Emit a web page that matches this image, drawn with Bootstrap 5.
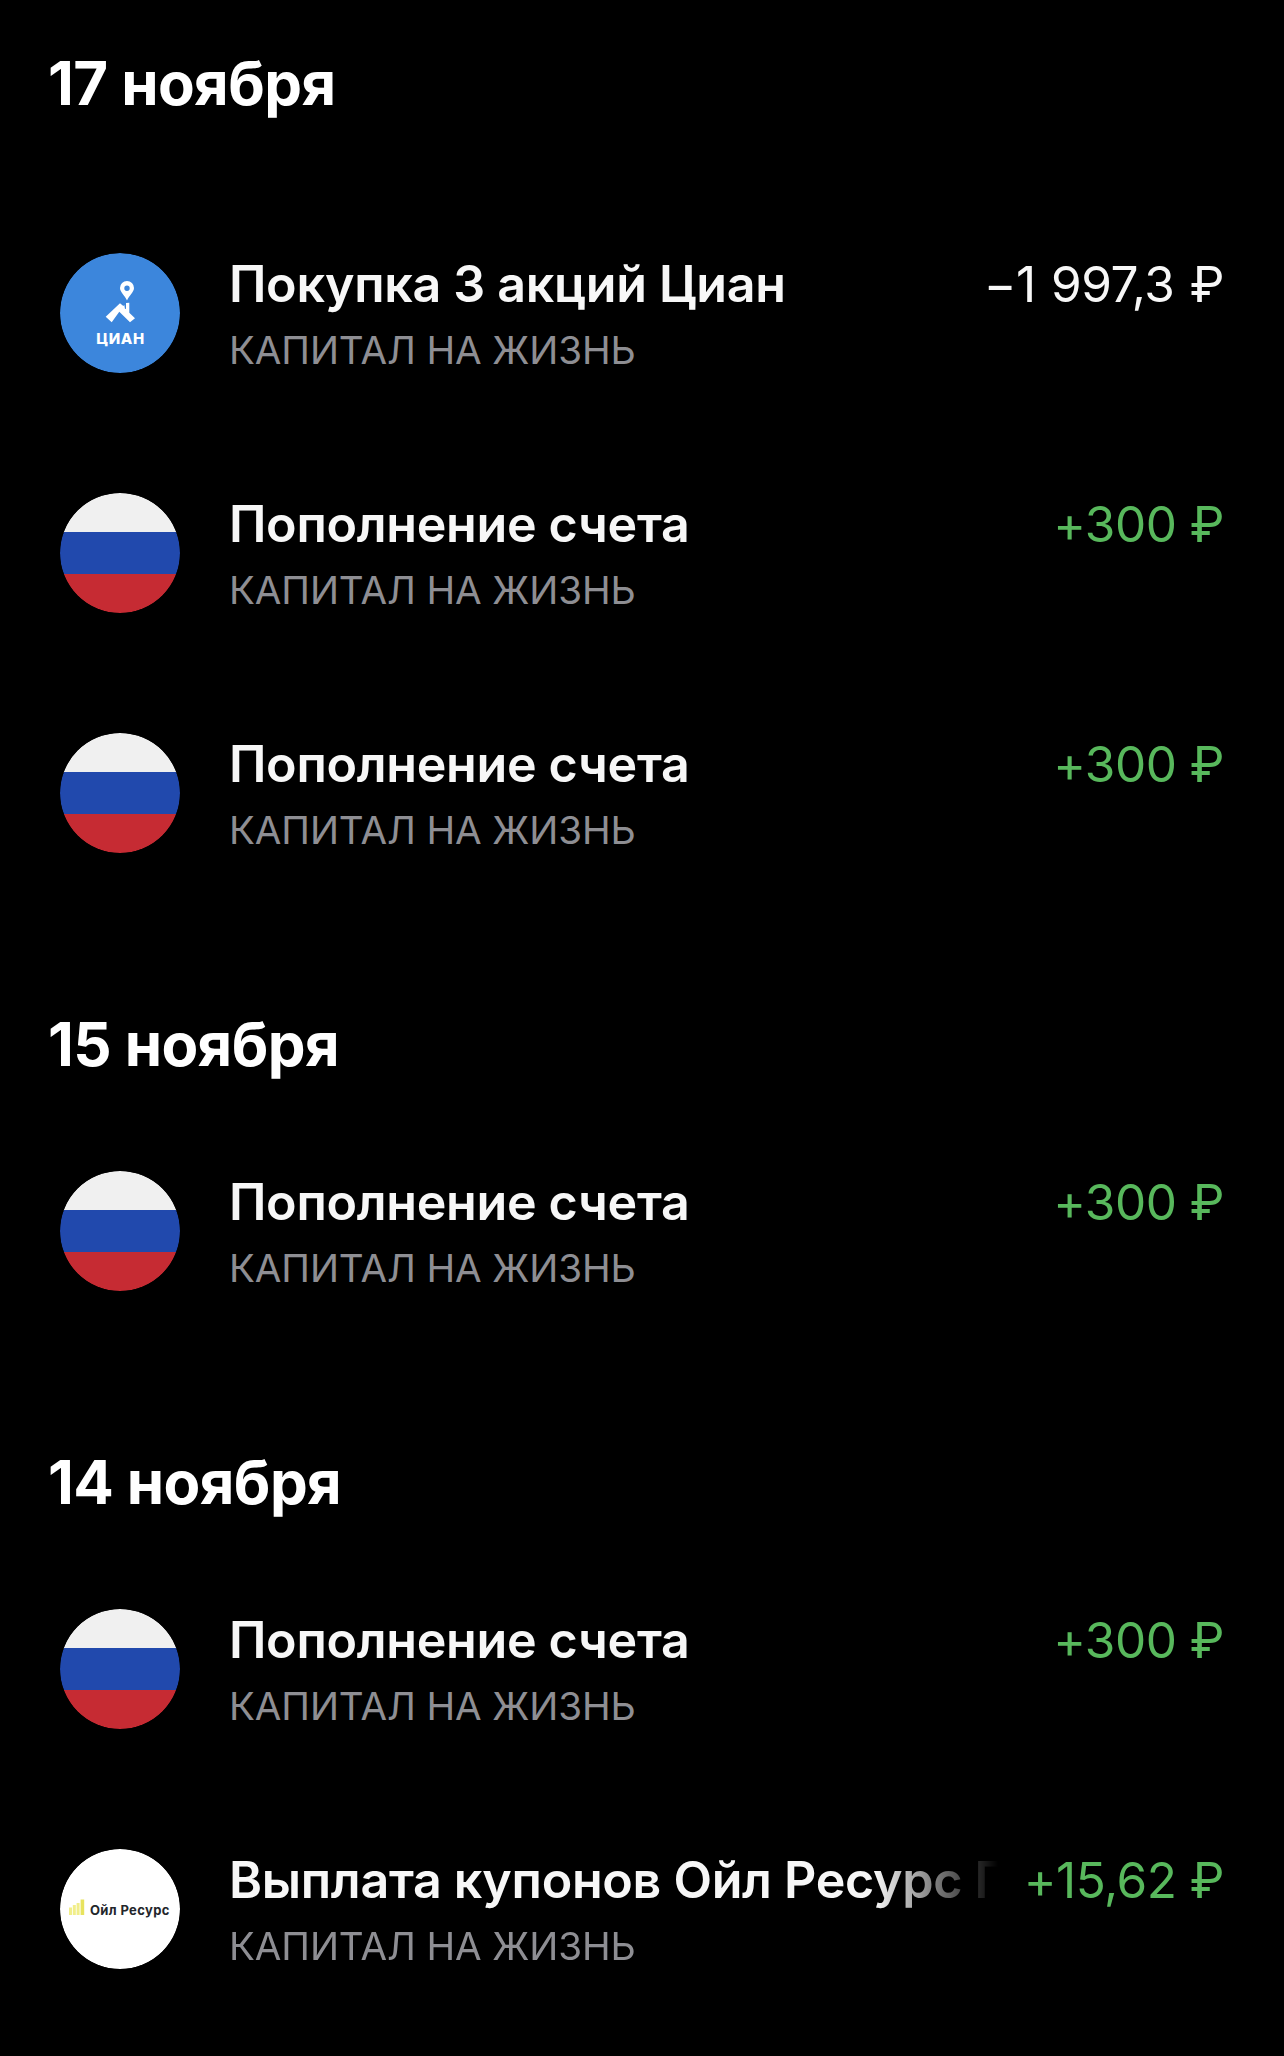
<!DOCTYPE html>
<html lang="ru">
<head>
<meta charset="utf-8">
<title>Операции</title>
<link href="https://cdn.jsdelivr.net/npm/bootstrap@5.3.0/dist/css/bootstrap.min.css" rel="stylesheet">
<style>
html,body{background:#000;}
body{font-family:Inter,"Noto Sans",sans-serif;color:#fff;overflow:hidden;}
.feed{padding:0 60px 0 48px;height:2056px;}
.day-title{font-size:60px;font-weight:700;line-height:80px;letter-spacing:-.6px;margin:0;padding:91px 0 27px;color:#fff;}
.day-first{padding:43px 0 70px;}
.op-row{height:240px;padding-left:12px;}
.op-logo{width:120px;height:120px;flex:0 0 120px;border-radius:50%;display:block;}
.op-body{margin-left:49px;min-width:0;flex:1 1 auto;}
.op-title{font-size:50.2px;font-weight:600;line-height:60px;letter-spacing:-.3px;white-space:nowrap;color:#f7f7f7;}
.op-fade{min-width:0;-webkit-mask-image:linear-gradient(90deg,#000 84%,transparent 100%);mask-image:linear-gradient(90deg,#000 84%,transparent 100%);}
.op-sub{font-size:38.6px;line-height:46px;margin-top:13px;color:#8e8e93;letter-spacing:-.1px;white-space:nowrap;}
.op-amount{font-size:49.5px;font-weight:400;line-height:60px;letter-spacing:-.5px;white-space:nowrap;flex:0 0 auto;margin-left:26px;}
.op-in{color:#58b85c;}
.op-out{color:#f7f7f7;word-spacing:2px;}
</style>
</head>
<body>
<main class="feed">
  <h2 class="day-title day-first">17 ноября</h2>

  <div class="op-row d-flex align-items-center">
    <svg class="op-logo" viewBox="0 0 120 120" role="img" aria-label="Циан">
      <circle cx="60" cy="60" r="60" fill="#3c86dc"/>
      <path fill="#fff" fill-rule="evenodd" d="M67 28a7 7 0 0 0-7 7c0 4 4.500 7 7 12.500 2.500-5.500 7-8.500 7-12.500a7 7 0 0 0-7-7zm0 4.500a2.700 2.700 0 1 1 0 5.400 2.700 2.700 0 0 1 0-5.400z"/>
      <path fill="#fff" d="M45.700 63.700 60 50.300l3.300 2.700 1-1 .7 4 1-.3v-5.700l3.300-.3v10l5.700 5.600-5 4-10.700-10.600-7.600 10.600z"/>
      <text x="60.500" y="90.500" text-anchor="middle" font-family="Inter, sans-serif" font-weight="800" font-size="15" letter-spacing=".6" fill="#fff">ЦИАН</text>
    </svg>
    <div class="op-body d-flex justify-content-between">
      <div><div class="op-title">Покупка 3 акций Циан</div><div class="op-sub">КАПИТАЛ НА ЖИЗНЬ</div></div>
      <div class="op-amount op-out">−1 997,3 ₽</div>
    </div>
  </div>

  <div class="op-row d-flex align-items-center">
    <svg class="op-logo" viewBox="0 0 120 120" role="img" aria-label="Флаг России"><defs><clipPath id="c1"><circle cx="60" cy="60" r="60"/></clipPath></defs><g clip-path="url(#c1)"><rect width="120" height="40" fill="#f0f0f0"/><rect y="39" width="120" height="42" fill="#2149ad"/><rect y="81" width="120" height="39" fill="#c62b33"/></g></svg>
    <div class="op-body d-flex justify-content-between">
      <div><div class="op-title">Пополнение счета</div><div class="op-sub">КАПИТАЛ НА ЖИЗНЬ</div></div>
      <div class="op-amount op-in">+300 ₽</div>
    </div>
  </div>

  <div class="op-row d-flex align-items-center">
    <svg class="op-logo" viewBox="0 0 120 120" role="img" aria-label="Флаг России"><g clip-path="url(#c1)"><rect width="120" height="40" fill="#f0f0f0"/><rect y="39" width="120" height="42" fill="#2149ad"/><rect y="81" width="120" height="39" fill="#c62b33"/></g></svg>
    <div class="op-body d-flex justify-content-between">
      <div><div class="op-title">Пополнение счета</div><div class="op-sub">КАПИТАЛ НА ЖИЗНЬ</div></div>
      <div class="op-amount op-in">+300 ₽</div>
    </div>
  </div>

  <h2 class="day-title">15 ноября</h2>

  <div class="op-row d-flex align-items-center">
    <svg class="op-logo" viewBox="0 0 120 120" role="img" aria-label="Флаг России"><g clip-path="url(#c1)"><rect width="120" height="40" fill="#f0f0f0"/><rect y="39" width="120" height="42" fill="#2149ad"/><rect y="81" width="120" height="39" fill="#c62b33"/></g></svg>
    <div class="op-body d-flex justify-content-between">
      <div><div class="op-title">Пополнение счета</div><div class="op-sub">КАПИТАЛ НА ЖИЗНЬ</div></div>
      <div class="op-amount op-in">+300 ₽</div>
    </div>
  </div>

  <h2 class="day-title">14 ноября</h2>

  <div class="op-row d-flex align-items-center">
    <svg class="op-logo" viewBox="0 0 120 120" role="img" aria-label="Флаг России"><g clip-path="url(#c1)"><rect width="120" height="40" fill="#f0f0f0"/><rect y="39" width="120" height="42" fill="#2149ad"/><rect y="81" width="120" height="39" fill="#c62b33"/></g></svg>
    <div class="op-body d-flex justify-content-between">
      <div><div class="op-title">Пополнение счета</div><div class="op-sub">КАПИТАЛ НА ЖИЗНЬ</div></div>
      <div class="op-amount op-in">+300 ₽</div>
    </div>
  </div>

  <div class="op-row d-flex align-items-center">
    <svg class="op-logo" viewBox="0 0 120 120" role="img" aria-label="Ойл Ресурс">
      <circle cx="60" cy="60" r="60" fill="#fff"/>
      <g fill="#f1ee8a"><rect x="9" y="58.500" width="3" height="7.500"/><rect x="12.800" y="56" width="3" height="10"/><rect x="16.600" y="54" width="3" height="12"/></g>
      <rect x="20.600" y="50.500" width="3.600" height="15.500" fill="#e8e35e"/>
      <text x="30" y="65.700" font-family="Inter, sans-serif" font-weight="700" font-size="13" letter-spacing=".35" fill="#23262b">Ойл Ресурс</text>
    </svg>
    <div class="op-body d-flex justify-content-between">
      <div class="op-fade"><div class="op-title">Выплата купонов Ойл Ресурс Г</div><div class="op-sub">КАПИТАЛ НА ЖИЗНЬ</div></div>
      <div class="op-amount op-in">+15,62 ₽</div>
    </div>
  </div>
</main>
</body>
</html>
